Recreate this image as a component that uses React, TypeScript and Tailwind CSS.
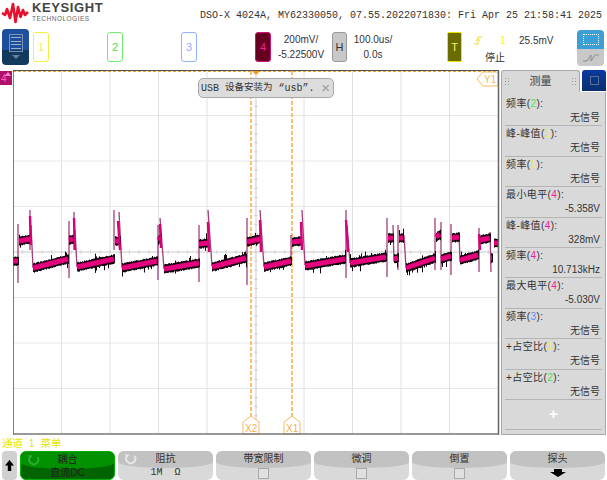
import { ReactNode } from 'react'

const cjk = "'Liberation Sans', 'Noto Sans CJK SC', sans-serif"
const mono = "'Liberation Mono', 'Noto Sans CJK SC', monospace"

// plot is 486 x 364, page x = plot x + 13, page y = plot y + 70
type Seg = [number, number, number, number]

const bands: Seg[] = [
  [13, 261, 18, 261],
  [19, 241, 30, 239],
  [33, 268, 68, 259],
  [69, 240, 73, 239],
  [77, 267, 114, 259],
  [115, 241, 120, 241],
  [122, 268, 157, 261],
  [158, 240, 161, 238],
  [164, 269, 199, 263],
  [199, 244, 208, 243],
  [212, 267, 246, 258],
  [247, 242, 260, 239],
  [264, 267, 291, 261],
  [292, 242, 301, 241],
  [305, 266, 345, 259],
  [350, 263, 386, 257],
  [388, 238, 393, 238],
  [394, 259, 398, 258],
  [399, 238, 403, 238],
  [406, 268, 435, 258],
  [436, 237, 440, 234],
  [441, 259, 451, 256],
  [452, 238, 459, 237],
  [460, 260, 478, 255],
  [480, 240, 490, 238],
  [491, 258, 492, 258],
  [494, 243, 498, 243],
]

const spikes: Seg[] = [
  [18, 224, 18, 283],
  [30, 210, 30, 250],
  [31, 225, 33, 268],
  [69, 221, 69, 278],
  [74, 212, 74, 250],
  [75, 230, 77, 267],
  [114, 210, 114, 250],
  [119, 212, 122, 268],
  [158, 225, 158, 280],
  [160, 218, 164, 269],
  [199, 225, 199, 282],
  [208, 210, 212, 266],
  [247, 218, 247, 285],
  [260, 210, 264, 267],
  [291, 235, 291, 260],
  [302, 210, 305, 265],
  [346, 210, 346, 278],
  [347, 225, 350, 263],
  [387, 218, 387, 277],
  [393, 225, 394, 262],
  [398, 225, 398, 270],
  [404, 235, 406, 268],
  [435, 218, 435, 270],
  [441, 222, 441, 270],
  [451, 224, 451, 275],
  [459, 232, 460, 262],
  [479, 228, 479, 272],
  [490, 232, 491, 272],
]

const peaks: Seg[] = [
  [30, 216, 31, 245],
  [74, 218, 75, 250],
  [118, 221, 120, 250],
  [160, 224, 161, 248],
  [208, 222, 209, 252],
  [260, 220, 261, 252],
  [301, 222, 302, 250],
  [346, 220, 348, 252],
  [479, 234, 480, 250],
]

function noiseTicks() {
  let seed = 17
  const rand = () => {
    seed = (seed * 16807) % 2147483647
    return seed / 2147483647
  }
  let d = ''
  for (const [x1, y1, x2, y2] of bands) {
    for (let x = x1; x <= x2; x += 1) {
      const y = y1 + ((y2 - y1) * (x - x1)) / Math.max(1, x2 - x1)
      const up = 4 + rand() * (rand() > 0.9 ? 6 : 1)
      const down = 4 + rand() * (rand() > 0.9 ? 6 : 1)
      d += `M${x + 0.5} ${(y - up).toFixed(1)}V${(y + down).toFixed(1)}`
    }
  }
  return d
}

function Scope() {
  const vLines = [1, 2, 3, 4, 6, 7, 8, 9].map((i) => 13 + i * 48.5)
  const hLines = [1, 2, 3, 5, 6, 7].map((i) => 70 + i * 45.5)
  const ticks: number[] = []
  for (let x = 13; x < 499; x += 9.7) ticks.push(x)
  const vTicks: number[] = []
  for (let y = 70; y < 434; y += 9.1) vTicks.push(y)

  return (
    <svg width={487} height={365} viewBox="13 70 487 365" className="block">
      <rect x={13} y={70} width={487} height={365} fill="#ffffff" />
      {vLines.map((x) => (
        <line key={x} x1={x} x2={x} y1={70} y2={434} stroke="#e0e0e0" strokeWidth={1} />
      ))}
      {hLines.map((y) => (
        <line key={y} x1={13} x2={498} y1={y} y2={y} stroke="#e8e8e8" strokeWidth={1} />
      ))}
      <line x1={13} x2={498} y1={252} y2={252} stroke="#dcdcdc" strokeWidth={1.5} />
      <line x1={256} x2={256} y1={70} y2={434} stroke="#dcdcdc" strokeWidth={1.5} />
      {ticks.map((x) => (
        <line key={x} x1={x} x2={x} y1={250} y2={254} stroke="#d4d4d4" />
      ))}
      {vTicks.map((y) => (
        <line key={y} x1={254} x2={258} y1={y} y2={y} stroke="#d4d4d4" />
      ))}

      <line x1={251} x2={251} y1={71} y2={416} stroke="#f7b04a" strokeWidth={1.6} strokeDasharray="4 2" />
      <line x1={292} x2={292} y1={71} y2={416} stroke="#f7b04a" strokeWidth={1.6} strokeDasharray="4 2" />

      {spikes.map(([x1, y1, x2, y2], i) => (
        <line key={i} x1={x1} y1={y1} x2={x2} y2={y2} stroke="#a03f78" strokeWidth={1.3} />
      ))}
      <path d={noiseTicks()} stroke="#16040f" strokeWidth={1} fill="none" />
      {bands.map(([x1, y1, x2, y2], i) => (
        <line key={i} x1={x1} y1={y1} x2={x2} y2={y2} stroke="#e5007e" strokeWidth={5} />
      ))}
      {peaks.map(([x1, y1, x2, y2], i) => (
        <line key={i} x1={x1} y1={y1} x2={x2} y2={y2} stroke="#d80078" strokeWidth={2.4} />
      ))}

      {/* top border, Y1 cursor dashes and trigger mark */}
      <line x1={13} x2={498} y1={70.5} y2={70.5} stroke="#555555" />
      <line x1={13} x2={498} y1={71.5} y2={71.5} stroke="#f0a030" strokeWidth={1} strokeDasharray="3 2" />
      <polygon points="252,71 260,71 256,75" fill="#f59a1d" />

      <polygon points="498,72 483,72 477,79 483,86 498,86" fill="#ffffff" stroke="#f7b860" />
      <text x={484} y={83} fontSize={10} fill="#f7b860" fontFamily="'Liberation Sans', sans-serif">Y1</text>

      <polygon points="251,416 259,422 259,434 243,434 243,422" fill="#ffffff" stroke="#f7b860" />
      <text x={245} y={432} fontSize={10} fill="#f7b050" fontFamily="'Liberation Sans', sans-serif">X2</text>
      <polygon points="292,416 300,422 300,434 284,434 284,422" fill="#ffffff" stroke="#f7b860" />
      <text x={286} y={432} fontSize={10} fill="#f7b050" fontFamily="'Liberation Sans', sans-serif">X1</text>

      <line x1={13} x2={13} y1={70} y2={435} stroke="#555555" strokeWidth={1.5} />
      <line x1={498.5} x2={498.5} y1={70} y2={435} stroke="#666666" strokeWidth={1.5} />
      <line x1={13} x2={499} y1={434} y2={434} stroke="#777777" strokeWidth={1.5} />
    </svg>
  )
}

function Logo() {
  return (
    <svg width={28} height={23} viewBox="0 0 28 23" className="shrink-0">
      <path
        d="M1 12 L4 14 L6 8 L9 17 L12 3 L14.5 21 L17 6 L19.5 16 L22 9 L24 14 L27 11"
        fill="none"
        stroke="#e8112d"
        strokeWidth={2.6}
        strokeLinejoin="round"
      />
    </svg>
  )
}

function ChannelBox({ n, border, text, fill }: { n: string; border: string; text: string; fill?: string }) {
  return (
    <div
      className="w-[16px] h-[30px] rounded-[3px] border flex items-center justify-center text-[11px]"
      style={{ borderColor: border, color: text, backgroundColor: fill }}
    >
      {n}
    </div>
  )
}

function TopBar() {
  return (
    <div className="h-[28px] flex items-start shrink-0">
      <div className="ml-[1px] mt-[1px]">
        <Logo />
      </div>
      <div className="ml-[3px] mt-[1px] w-[168px]">
        <div className="text-[13px] leading-[13px] font-bold tracking-[0.6px] text-[#444444]">KEYSIGHT</div>
        <div className="text-[6.5px] leading-[8px] mt-[1px] tracking-[0.5px] text-[#666666]">TECHNOLOGIES</div>
      </div>
      <div className="mt-[10px] text-[10px] leading-[12px] text-[#333333] whitespace-nowrap" style={{ fontFamily: mono }}>
        DSO-X 4024A, MY62330050, 07.55.2022071830: Fri Apr 25 21:58:41 2025
      </div>
    </div>
  )
}

function ChannelRow() {
  return (
    <div className="h-[42px] flex items-start pt-[1px] shrink-0 text-[10px] text-[#333333]">
      <div className="ml-[2px] w-[27px] h-[36px] rounded-[4px] bg-[linear-gradient(#1d4f9c_0,#1d4f9c_58%,#123a5e_58%,#123a5e_100%)] flex flex-col items-center pt-[5px] shrink-0">
        <div className="w-[14px] h-[18px] border border-[#7d93b5] flex flex-col justify-around px-[1px] py-[1px]">
          <div className="h-px bg-[#9fb0c8]" />
          <div className="h-px bg-[#9fb0c8]" />
          <div className="h-px bg-[#9fb0c8]" />
          <div className="h-px bg-[#9fb0c8]" />
        </div>
        <div className="mt-[3px] w-0 h-0 border-x-[4px] border-x-transparent border-t-[4px] border-t-[#6d7f96]" />
      </div>
      <div className="ml-[4px] mt-[3px]">
        <ChannelBox n="1" border="#f0f040" text="#f0f040" />
      </div>
      <div className="ml-[58px] mt-[3px]">
        <ChannelBox n="2" border="#6ef06e" text="#50e050" />
      </div>
      <div className="ml-[58px] mt-[3px]">
        <ChannelBox n="3" border="#8fb0ff" text="#8fb0ff" />
      </div>
      <div className="ml-[58px] mt-[3px]">
        <ChannelBox n="4" border="#d0107a" text="#f020a0" fill="#66001f" />
      </div>
      <div className="ml-[6px] mt-[3px] w-[48px] h-[30px] flex flex-col justify-between items-center leading-[13px] py-[1px]">
        <div>200mV/</div>
        <div>-5.22500V</div>
      </div>
      <div className="ml-[7px] mt-[3px] w-[15px] h-[30px] rounded-[3px] bg-[#c8c8c8] border border-[#999999] flex items-center justify-center text-[11px]">
        H
      </div>
      <div className="ml-[6px] mt-[3px] w-[40px] h-[30px] flex flex-col justify-between items-center leading-[13px] py-[1px]">
        <div>100.0us/</div>
        <div>0.0s</div>
      </div>
      <div className="ml-[54px] mt-[3px] w-[15px] h-[30px] rounded-[2px] bg-[#6b6b00] border border-[#e6e600] text-[#f5f56a] flex items-center justify-center text-[11px]">
        T
      </div>
      <div className="ml-[10px] mt-[3px] w-[84px] shrink-0">
        <div className="flex items-center h-[16px]">
          <svg width={10} height={11} viewBox="0 0 10 11" className="ml-[1px]">
            <path d="M1 9 H5 V2 H9 M3 6 L5 3.5 L7 6" fill="none" stroke="#f0e020" strokeWidth={1} />
          </svg>
          <span className="ml-[17px] text-[#f0f040] w-[19px]">1</span>
          <span>25.5mV</span>
        </div>
        <div className="mt-[2px] ml-[13px]" style={{ fontFamily: cjk }}>
          停止
        </div>
      </div>
      <div className="ml-[21px] w-[27px] flex flex-col shrink-0 mt-[1px]">
        <div className="h-[19px] rounded-t-[4px] bg-[#3c9fd6] flex items-center justify-center">
          <div className="w-[16px] h-[11px] border border-dotted border-white" />
        </div>
        <div className="h-[17px] rounded-b-[4px] bg-[#c8c8c8] flex items-center justify-center">
          <svg width={18} height={12} viewBox="0 0 18 12">
            <path d="M1 9 H5 L9 3 V9 L13 3 H17" fill="none" stroke="#8c8c8c" strokeWidth={1} />
          </svg>
        </div>
      </div>
    </div>
  )
}

function Ch({ c, n }: { c: string; n: string }) {
  return (
    <>
      (<span style={{ color: c }}>{n}</span>):
    </>
  )
}

const YEL = '#f0f040'
const GRN = '#50e050'
const BLU = '#5f8fff'
const MAG = '#f020a0'

const rows: { label: string; c: string; n: string; value: string }[] = [
  { label: '峰-峰值', c: YEL, n: '1', value: '无信号' },
  { label: '频率', c: YEL, n: '1', value: '无信号' },
  { label: '最小电平', c: MAG, n: '4', value: '-5.358V' },
  { label: '峰-峰值', c: MAG, n: '4', value: '328mV' },
  { label: '频率', c: MAG, n: '4', value: '10.713kHz' },
  { label: '最大电平', c: MAG, n: '4', value: '-5.030V' },
  { label: '频率', c: BLU, n: '3', value: '无信号' },
  { label: '+占空比', c: YEL, n: '1', value: '无信号' },
  { label: '+占空比', c: GRN, n: '2', value: '无信号' },
]

function MeasureRow({ label, c, n, value }: { label: string; c: string; n: string; value: string }) {
  return (
    <div className="h-[30.4px] mx-[3px] border-b border-[#b4b4b4] shrink-0 flex flex-col text-[10px] leading-[14px] text-[#333333]">
      <div className="pl-[1px] pt-[1px] tracking-[0.4px]">
        {label}
        <Ch c={c} n={n} />
      </div>
      <div className="text-right pr-[2px]">{value}</div>
    </div>
  )
}

function Grip() {
  return (
    <svg width={4} height={7} viewBox="0 0 4 7" className="shrink-0">
      <path d="M0 0h1v1H0zM3 0h1v1H3zM0 3h1v1H0zM3 3h1v1H3zM0 6h1v1H0zM3 6h1v1H3z" fill="#999999" />
    </svg>
  )
}

function MeasurePanel() {
  return (
    <div className="w-[105px] ml-[1px] shrink-0 flex flex-col h-[365px]" style={{ fontFamily: cjk }}>
      <div className="h-[22px] flex shrink-0">
        <div className="w-[79px] rounded-t-[3px] border border-b-0 border-[#a8a8a8] bg-[#d9d9d9] flex items-center justify-between px-[3px] text-[11px] text-[#444444]">
          <Grip />
          测量
          <Grip />
        </div>
        <div className="ml-[2px] w-[24px] h-[21px] rounded-t-[3px] bg-[linear-gradient(#0a3aa0,#0a2f70)] flex items-center justify-center">
          <div className="w-[9px] h-[9px] border border-[#5a6f90]" />
        </div>
      </div>
      <div className="flex-1 bg-[#d9d9d9] border border-t-0 border-[#a8a8a8] flex flex-col pt-[4px]">
        <MeasureRow label="频率" c={GRN} n="2" value="无信号" />
        {rows.map((r, i) => (
          <MeasureRow key={i} {...r} />
        ))}
        <div className="flex-1 mx-[3px] flex items-center justify-center text-white text-[15px] font-bold border-b border-[#b4b4b4] mb-[4px]">
          +
        </div>
      </div>
    </div>
  )
}

function SoftKey({
  title,
  children,
  green,
  icon,
}: {
  title: string
  children?: ReactNode
  green?: boolean
  icon?: ReactNode
}) {
  return (
    <div
      className={
        'relative w-[95px] h-[29px] rounded-[6px] overflow-hidden shrink-0 flex flex-col items-center text-[10px] ' +
        (green ? 'bg-[#006400] border border-[#00b000] text-[#222222]' : 'bg-[#d9d9d9] text-[#333333]')
      }
    >
      <div
        className={
          'absolute left-0 right-0 top-0 h-[17px] rounded-b-[50%_6px] ' + (green ? 'bg-[#009000]' : 'bg-[#c2c2c2]')
        }
      />
      {icon}
      <div className="relative leading-[14px] mt-[1px]">{title}</div>
      <div className="relative flex-1 flex items-center justify-center">{children}</div>
    </div>
  )
}

function Check() {
  return <div className="w-[11px] h-[11px] bg-[#e0e0e0] border border-[#a8a8a8]" />
}

function Refresh({ color }: { color: string }) {
  return (
    <svg width={13} height={13} viewBox="0 0 13 13" className="absolute left-[6px] top-[2px]">
      <path d="M3 3 A4.6 4.6 0 1 0 10.5 3" fill="none" stroke={color} strokeWidth={2} />
      <path d="M1 1 L5.5 1.5 L2.5 5.5 Z" fill={color} />
    </svg>
  )
}

function SoftKeys() {
  return (
    <div className="flex items-start gap-[3px] pl-[2px]" style={{ fontFamily: cjk }}>
      <div className="w-[15px] h-[29px] rounded-[4px] bg-[#d0d0d0] flex items-center justify-center shrink-0">
        <svg width={9} height={11} viewBox="0 0 9 11">
          <path d="M4.5 0 L9 5.5 H6.2 V11 H2.8 V5.5 H0 Z" fill="#000000" />
        </svg>
      </div>
      <SoftKey title="耦合" green icon={<Refresh color="#2fa82f" />}>
        <span className="leading-[12px]">直流DC</span>
      </SoftKey>
      <SoftKey title="阻抗" icon={<Refresh color="#e6e6e6" />}>
        <span className="leading-[12px] whitespace-pre" style={{ fontFamily: mono }}>
          1M  Ω
        </span>
      </SoftKey>
      <SoftKey title="带宽限制">
        <Check />
      </SoftKey>
      <SoftKey title="微调">
        <Check />
      </SoftKey>
      <SoftKey title="倒置">
        <Check />
      </SoftKey>
      <SoftKey title="探头">
        <svg width={16} height={8} viewBox="0 0 16 8">
          <path d="M4 0 H12 V3 H16 L8 8 L0 3 H4 Z" fill="#000000" />
        </svg>
      </SoftKey>
    </div>
  )
}

export default function App() {
  return (
    <div className="relative w-[607px] h-[480px] bg-white overflow-hidden flex flex-col" style={{ fontFamily: "'Liberation Sans', sans-serif" }}>
      <TopBar />
      <ChannelRow />
      <div className="flex items-start shrink-0 h-[365px]">
        <div className="w-[13px] shrink-0 pt-[1px]">
          <div className="relative w-[12px] h-[14px] bg-[#b0106a] text-[#ff60b8] text-[10px] leading-[15px] pl-[1px]">
            4
            <div className="absolute right-[1px] top-[1px] w-0 h-0 border-x-[3px] border-x-transparent border-b-[4px] border-b-[#ff90cc]" />
          </div>
        </div>
        <Scope />
        <MeasurePanel />
      </div>
      <div className="h-[16px] pt-[1px] text-[10.5px] leading-[14px] pl-[2px] text-[#e6e600] shrink-0 whitespace-pre" style={{ fontFamily: cjk }}>
        通道  1  菜单
      </div>
      <SoftKeys />

      {/* message popup lies over the plot */}
      <div
        className="absolute left-[198px] top-[78px] w-[136px] h-[20px] rounded-[5px] bg-[#dcdcdc] border border-[#a8a8a8] flex items-center pl-[2px] text-[10px] text-[#333333] whitespace-pre"
        style={{ fontFamily: mono }}
      >
        USB <span className="text-[9.5px]">设备安装为</span> “usb”.
        <span className="absolute right-[3px] top-[1px] text-[15px] leading-[16px] text-[#999999]" style={{ fontFamily: cjk }}>
          ×
        </span>
      </div>
    </div>
  )
}
